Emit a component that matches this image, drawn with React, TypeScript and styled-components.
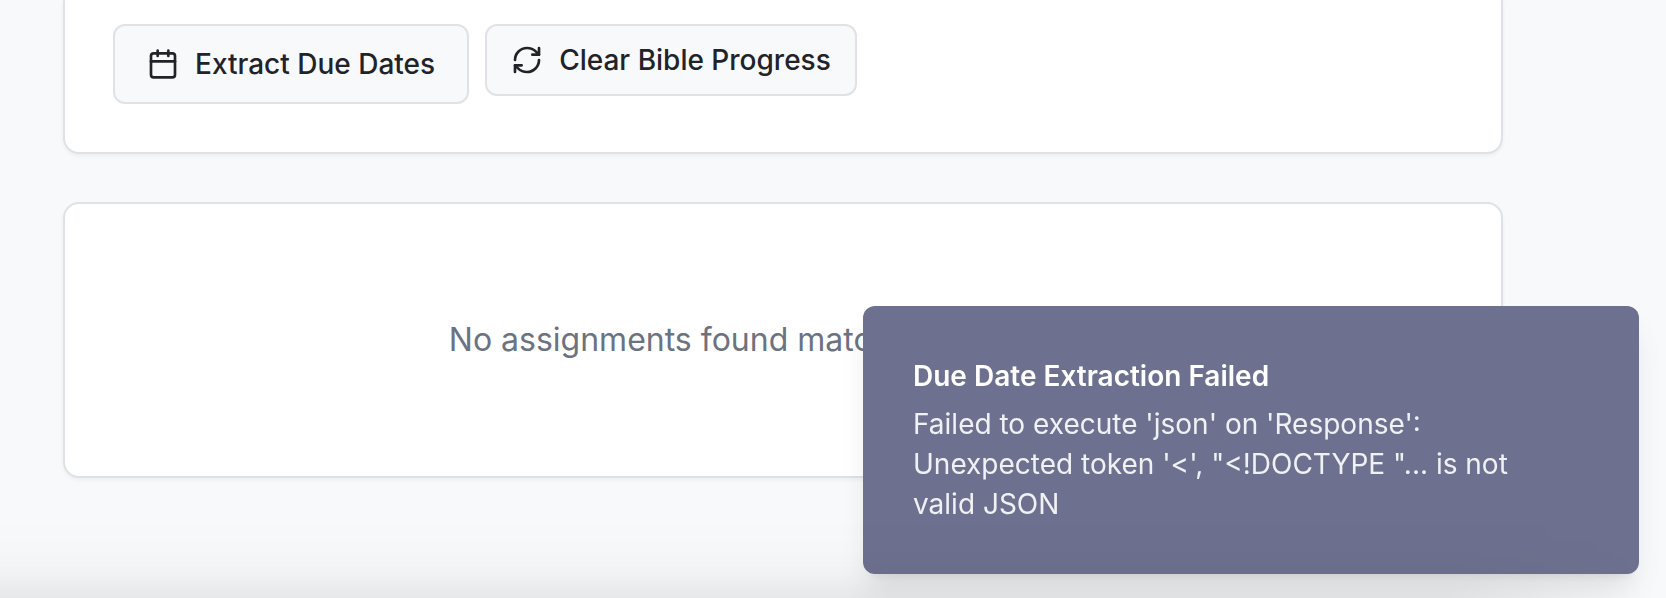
import React from "react";
import styled, { createGlobalStyle, css } from "styled-components";
import { Calendar, RefreshCw } from "lucide-react";

const GlobalStyle = createGlobalStyle`
  *, *::before, *::after { box-sizing: border-box; }
  body {
    margin: 0;
    background: #f8f9fb;
    color: #212328;
    font-family: Inter, "Liberation Sans", sans-serif;
    -webkit-font-smoothing: antialiased;
  }
`;

const Page = styled.main`
  min-height: 100vh;
  display: flex;
  flex-direction: column;
  gap: 48px;
  padding: 0 163px 120px 63px;
`;

const Card = styled.section<{ $continued?: boolean }>`
  background: #ffffff;
  border: 2px solid #dee2e6;
  border-radius: 16px;
  padding: 48px;
  box-shadow: 0 2px 4px rgba(0, 0, 0, 0.05);
  ${({ $continued }) =>
    $continued &&
    css`
      border-top: 0;
      border-top-left-radius: 0;
      border-top-right-radius: 0;
      padding-top: 24px;
    `}
`;

const Actions = styled.div`
  display: flex;
  align-items: flex-start;
  gap: 16px;
`;

const ActionButton = styled.button<{ $compact?: boolean }>`
  display: inline-flex;
  align-items: center;
  gap: 16px;
  height: ${({ $compact }) => ($compact ? 72 : 80)}px;
  padding: 0 ${({ $compact }) => ($compact ? 24 : 32)}px;
  border: 2px solid #dfe2e7;
  border-radius: 12px;
  background: #f8f9fb;
  color: inherit;
  font-family: inherit;
  font-size: 28px;
  font-weight: 500;
  line-height: 40px;
  white-space: nowrap;
  cursor: pointer;
`;

const EmptyMessage = styled.p`
  margin: 0;
  padding: 64px 0;
  color: #6b7280;
  font-size: 32px;
  line-height: 48px;
  text-align: center;
`;

const BottomFade = styled.div`
  position: fixed;
  inset: auto 0 0 0;
  height: 80px;
  pointer-events: none;
  background: linear-gradient(
    to bottom,
    rgba(0, 0, 0, 0) 0%,
    rgba(0, 0, 0, 0.006) 40%,
    rgba(0, 0, 0, 0.026) 70%,
    rgba(0, 0, 0, 0.07) 100%
  );
  mask-image: linear-gradient(to left, transparent 20px, #000 220px);
`;

const Toast = styled.div`
  position: fixed;
  right: 27px;
  bottom: 24px;
  width: 776px;
  max-width: calc(100vw - 54px);
  display: grid;
  gap: 8px;
  padding: 50px 98px 50px 50px;
  border-radius: 12px;
  background: #6d718f;
  color: #ffffff;
  font-size: 28px;
  line-height: 40px;
  box-shadow: 0 20px 30px -6px rgba(0, 0, 0, 0.1), 0 8px 12px -8px rgba(0, 0, 0, 0.1);
`;

const ToastTitle = styled.div`
  font-weight: 600;
`;

const ToastDescription = styled.div`
  opacity: 0.9;
`;

export default function App() {
  return (
    <>
      <GlobalStyle />
      <Page>
        <Card $continued>
          <Actions>
            <ActionButton type="button">
              <Calendar size={32} aria-hidden />
              Extract Due Dates
            </ActionButton>
            <ActionButton type="button" $compact>
              <RefreshCw size={32} aria-hidden />
              Clear Bible Progress
            </ActionButton>
          </Actions>
        </Card>
        <Card>
          <EmptyMessage>No assignments found matching your filters.</EmptyMessage>
        </Card>
      </Page>
      <Toast role="status">
        <ToastTitle>Due Date Extraction Failed</ToastTitle>
        <ToastDescription>
          {`Failed to execute 'json' on 'Response': Unexpected token '<', "<!DOCTYPE "... is not valid JSON`}
        </ToastDescription>
      </Toast>
      <BottomFade />
    </>
  );
}
